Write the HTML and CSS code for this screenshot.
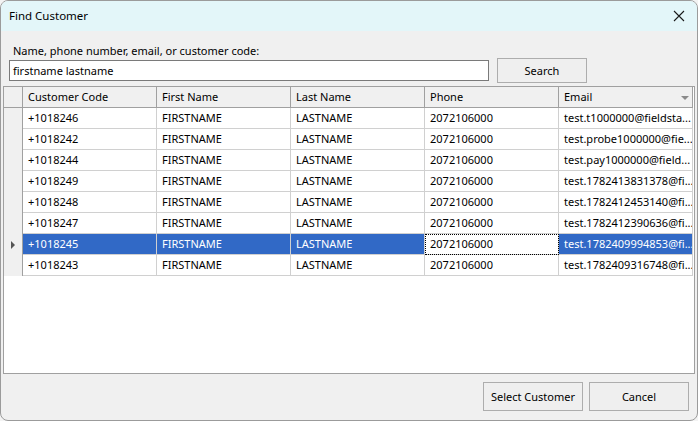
FILE: index.html
```html
<!DOCTYPE html>
<html>
<head>
<meta charset="utf-8">
<link rel="stylesheet" href="styles.css">
</head>
<body>
<div class="window">
  <div class="titlebar">
    <span class="title">Find Customer</span>
    <svg class="close" width="12" height="12" viewBox="0 0 12 12"><path d="M1 1 L11 11 M11 1 L1 11" stroke="#1a1a1a" stroke-width="1.1" fill="none"/></svg>
  </div>
  <div class="content">
    <div class="label">Name, phone number, email, or customer code:</div>
    <div class="searchrow">
      <div class="input">firstname lastname</div>
      <div class="btn search">Search</div>
    </div>
    <div class="grid">
      <div class="row head">
        <div class="rh"></div>
        <div class="cell">Customer Code</div>
        <div class="cell">First Name</div>
        <div class="cell">Last Name</div>
        <div class="cell">Phone</div>
        <div class="cell email-h">Email<span class="sort"></span></div>
      </div>
      <div class="row"><div class="rh"></div><div class="cell">+1018246</div><div class="cell">FIRSTNAME</div><div class="cell">LASTNAME</div><div class="cell">2072106000</div><div class="cell">test.t1000000@fieldsta...</div></div>
      <div class="row"><div class="rh"></div><div class="cell">+1018242</div><div class="cell">FIRSTNAME</div><div class="cell">LASTNAME</div><div class="cell">2072106000</div><div class="cell">test.probe1000000@fie...</div></div>
      <div class="row"><div class="rh"></div><div class="cell">+1018244</div><div class="cell">FIRSTNAME</div><div class="cell">LASTNAME</div><div class="cell">2072106000</div><div class="cell">test.pay1000000@field...</div></div>
      <div class="row"><div class="rh"></div><div class="cell">+1018249</div><div class="cell">FIRSTNAME</div><div class="cell">LASTNAME</div><div class="cell">2072106000</div><div class="cell">test.1782413831378@fi...</div></div>
      <div class="row"><div class="rh"></div><div class="cell">+1018248</div><div class="cell">FIRSTNAME</div><div class="cell">LASTNAME</div><div class="cell">2072106000</div><div class="cell">test.1782412453140@fi...</div></div>
      <div class="row"><div class="rh"></div><div class="cell">+1018247</div><div class="cell">FIRSTNAME</div><div class="cell">LASTNAME</div><div class="cell">2072106000</div><div class="cell">test.1782412390636@fi...</div></div>
      <div class="row selected"><div class="rh"><span class="arrow"></span></div><div class="cell">+1018245</div><div class="cell">FIRSTNAME</div><div class="cell">LASTNAME</div><div class="cell focus">2072106000</div><div class="cell">test.1782409994853@fi...</div></div>
      <div class="row"><div class="rh"></div><div class="cell">+1018243</div><div class="cell">FIRSTNAME</div><div class="cell">LASTNAME</div><div class="cell">2072106000</div><div class="cell">test.1782409316748@fi...</div></div>
    </div>
    <div class="footer">
      <div class="btn wide">Select Customer</div>
      <div class="btn wide">Cancel</div>
    </div>
  </div>
</div>
</body>
</html>
```

FILE: styles.css
```css
html, body {
  margin: 0;
  padding: 0;
  background: #f3f3f3;
}
body {
  font-family: "Noto Sans", "Open Sans", sans-serif;
  font-size: 11px;
  color: #000;
  width: 698px;
  height: 421px;
  overflow: hidden;
}
.window {
  box-sizing: border-box;
  width: 698px;
  height: 421px;
  border: 1px solid #9b9b9b;
  border-radius: 8px;
  overflow: hidden;
  background: #f0f0f0;
  display: flex;
  flex-direction: column;
}
.titlebar {
  height: 30px;
  flex: none;
  background: #e3f6f9;
  display: flex;
  align-items: center;
  justify-content: space-between;
  padding: 0 12px 0 8px;
}
.title {
  font-size: 11.5px;
  line-height: 14px;
}
.close {
  display: block;
}
.content {
  flex: 1;
  display: flex;
  flex-direction: column;
  padding: 0 2px 0 2px;
}
.label {
  margin: 13px 0 0 10px;
  line-height: 14px;
  height: 14px;
}
.searchrow {
  display: flex;
  align-items: center;
  margin: 0 0 0 6px;
  height: 25px;
}
.input {
  box-sizing: border-box;
  width: 480px;
  height: 21px;
  border: 1px solid #7a7a7a;
  background: #fff;
  padding: 0 3px;
  line-height: 19px;
}
.btn {
  box-sizing: border-box;
  border: 1px solid #adadad;
  background: #efefef;
  display: flex;
  align-items: center;
  justify-content: center;
}
.search {
  width: 90px;
  height: 25px;
  margin-left: 8px;
}
.grid {
  box-sizing: border-box;
  margin-top: 3px;
  width: 692px;
  height: 288px;
  border: 1px solid #a0a0a0;
  background: #fff;
}
.row {
  display: grid;
  grid-template-columns: 19px repeat(5, 134px);
  height: 21px;
}
.rh {
  box-sizing: border-box;
  background: #f0f0f0;
  border-right: 1px solid #a0a0a0;
  display: flex;
  align-items: center;
  justify-content: center;
}
.cell {
  box-sizing: border-box;
  border-right: 1px solid #d0d0d0;
  border-bottom: 1px solid #d0d0d0;
  padding: 0 0 0 5px;
  line-height: 20px;
  white-space: nowrap;
  overflow: hidden;
}
.head .rh {
  border-bottom: 1px solid #a0a0a0;
}
.head .cell {
  background: #f0f0f0;
  border-right: 1px solid #a0a0a0;
  border-bottom: 1px solid #a0a0a0;
}
.email-h {
  position: relative;
}
.sort {
  position: absolute;
  right: 3px;
  top: 9px;
  width: 0;
  height: 0;
  border-left: 4px solid transparent;
  border-right: 4px solid transparent;
  border-top: 4px solid #8a8a8a;
}
.selected .cell {
  background: #3169c6;
  color: #fff;
}
.selected .cell.focus {
  background: #fff;
  color: #000;
  outline: 1px dotted #000;
  outline-offset: -1px;
}
.arrow {
  width: 0;
  height: 0;
  border-top: 4px solid transparent;
  border-bottom: 4px solid transparent;
  border-left: 4px solid #555;
}
.footer {
  display: flex;
  justify-content: flex-end;
  gap: 6px;
  padding: 8px 6px 0 0;
}
.wide {
  width: 100px;
  height: 29px;
}
```
